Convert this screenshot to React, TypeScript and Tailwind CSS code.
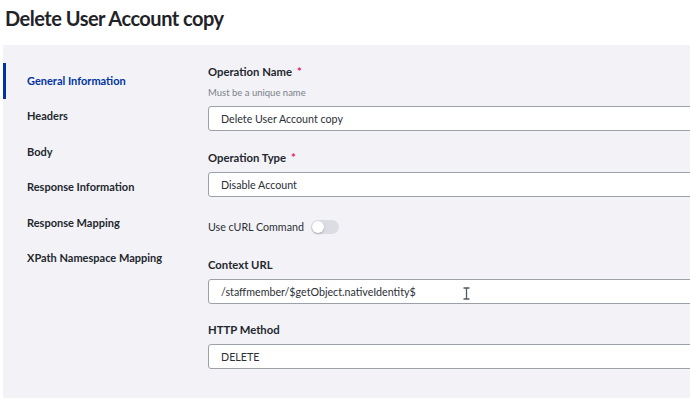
import React from 'react';

const navItems = [
  'General Information',
  'Headers',
  'Body',
  'Response Information',
  'Response Mapping',
  'XPath Namespace Mapping',
];

function Label({ text, required }: { text: string; required?: boolean }) {
  return (
    <div className="h-4 leading-4 text-[11.3px] font-bold text-[#23272e]">
      {text}
      {required && <span className="ml-[5px] text-[#e0245e]">*</span>}
    </div>
  );
}

function Field({ value, children }: { value: string; children?: React.ReactNode }) {
  return (
    <div className="relative mt-[6px] h-[25px] w-[520px] rounded-l-[3px] border border-[#9ca0a8] bg-white pl-[12px] text-[10.7px] leading-[23px] text-[#2b2f36]">
      {value}
      {children}
    </div>
  );
}

export default function App() {
  return (
    <div className="h-[399px] w-[690px] overflow-hidden bg-white font-['Lato','Liberation_Sans',sans-serif]">
      <h1 className="h-[45px] pl-[5px] pt-[4px] text-[20px] font-bold leading-[28px] tracking-[-0.5px] text-[#1f2328]">
        Delete User Account copy
      </h1>
      <div className="ml-[3px] flex h-[353px] overflow-hidden bg-[#f3f3f7]">
        <nav className="w-[205px] shrink-0 pt-[18px]">
          {navItems.map((item, i) => (
            <div
              key={item}
              className={
                i === 0
                  ? 'flex h-[35.5px] items-center border-l-[3px] border-[#0033a1] pl-[21px] text-[11px] font-bold text-[#0033a1]'
                  : 'flex h-[35.5px] items-center pl-[24px] text-[11px] font-bold text-[#23272e]'
              }
            >
              {item}
            </div>
          ))}
        </nav>
        <div className="flex-1 pt-[19px]">
          <Label text="Operation Name" required />
          <div className="mt-[5px] h-4 leading-4 text-[9.5px] text-[#7a7f87]">Must be a unique name</div>
          <div className="-mt-[1px]">
            <Field value="Delete User Account copy" />
          </div>

          <div className="mt-[19px]">
            <Label text="Operation Type" required />
          </div>
          <Field value="Disable Account" />

          <div className="mt-[22px] flex h-4 items-center gap-[7px] text-[10.7px] text-[#2b2f36]">
            <span>Use cURL Command</span>
            <span className="relative h-[14px] w-[28px] rounded-full bg-[#dcdde3]">
              <span className="absolute left-[1px] top-[1px] h-[12px] w-[12px] rounded-full bg-white shadow-[0_1px_2px_rgba(0,0,0,0.25)]" />
            </span>
          </div>

          <div className="mt-[22px]">
            <Label text="Context URL" />
          </div>
          <Field value="/staffmember/$getObject.nativeIdentity$">
            <svg className="absolute left-[254px] top-[7px]" width="7" height="13" viewBox="0 0 7 13">
              <path d="M0.5 1H6.5M3.5 1V12M0.5 12H6.5" stroke="#555a62" strokeWidth="1.3" fill="none" />
            </svg>
          </Field>

          <div className="mt-[18px]">
            <Label text="HTTP Method" />
          </div>
          <Field value="DELETE" />
        </div>
      </div>
    </div>
  );
}
